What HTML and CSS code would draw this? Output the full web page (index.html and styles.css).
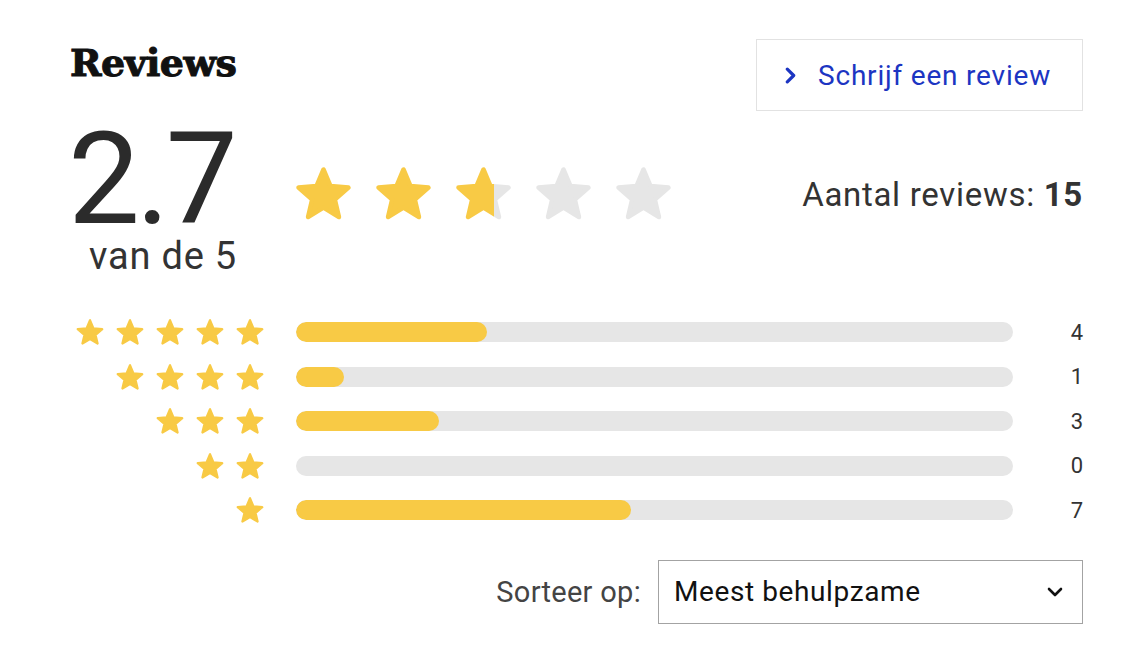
FILE: index.html
```html
<!DOCTYPE html>
<html lang="nl">
<head>
<meta charset="utf-8">
<title>Reviews</title>
<link rel="stylesheet" href="styles.css">
</head>
<body>
<svg class="defs" width="0" height="0" aria-hidden="true">
  <defs>
    <linearGradient id="partial" x1="0" x2="1" y1="0" y2="0">
      <stop offset="0.72" stop-color="#f8ca45"/>
      <stop offset="0.72" stop-color="#e6e6e6"/>
    </linearGradient>
    <symbol id="star" viewBox="0.6 0.8 22.8 21.6">
      <path d="M12 17.27L18.18 21l-1.64-7.03L22 9.24l-7.19-.61L12 2 9.19 8.63 2 9.24l5.46 4.73L5.82 21z" stroke-linejoin="round" stroke-width="1.8"/>
    </symbol>
  </defs>
</svg>
<main class="reviews">
  <header class="head">
    <h2 class="title">Reviews</h2>
    <a class="write-btn" href="#">
      <svg class="chev" viewBox="0 0 10 16"><path d="M2 2l6 6-6 6" fill="none" stroke="currentColor" stroke-width="3" stroke-linecap="round" stroke-linejoin="round"/></svg>
      <span>Schrijf een review</span>
    </a>
  </header>

  <section class="summary">
    <div class="score">
      <div class="score-num">2.7</div>
      <div class="score-of">van de 5</div>
    </div>
    <div class="big-stars">
      <svg class="bstar on"><use href="#star"/></svg>
      <svg class="bstar on"><use href="#star"/></svg>
      <svg class="bstar part"><use href="#star"/></svg>
      <svg class="bstar off"><use href="#star"/></svg>
      <svg class="bstar off"><use href="#star"/></svg>
    </div>
    <div class="count">Aantal reviews: <b>15</b></div>
  </section>

  <section class="dist">
    <div class="row">
      <div class="sstars"><svg class="sstar"><use href="#star"/></svg><svg class="sstar"><use href="#star"/></svg><svg class="sstar"><use href="#star"/></svg><svg class="sstar"><use href="#star"/></svg><svg class="sstar"><use href="#star"/></svg></div>
      <div class="bar"><div class="fill" style="width:26.667%"></div></div>
      <div class="num">4</div>
    </div>
    <div class="row">
      <div class="sstars"><svg class="sstar"><use href="#star"/></svg><svg class="sstar"><use href="#star"/></svg><svg class="sstar"><use href="#star"/></svg><svg class="sstar"><use href="#star"/></svg></div>
      <div class="bar"><div class="fill" style="width:6.667%"></div></div>
      <div class="num">1</div>
    </div>
    <div class="row">
      <div class="sstars"><svg class="sstar"><use href="#star"/></svg><svg class="sstar"><use href="#star"/></svg><svg class="sstar"><use href="#star"/></svg></div>
      <div class="bar"><div class="fill" style="width:20%"></div></div>
      <div class="num">3</div>
    </div>
    <div class="row">
      <div class="sstars"><svg class="sstar"><use href="#star"/></svg><svg class="sstar"><use href="#star"/></svg></div>
      <div class="bar"></div>
      <div class="num">0</div>
    </div>
    <div class="row">
      <div class="sstars"><svg class="sstar"><use href="#star"/></svg></div>
      <div class="bar"><div class="fill" style="width:46.667%"></div></div>
      <div class="num">7</div>
    </div>
  </section>

  <section class="sort">
    <span class="sort-label">Sorteer op:</span>
    <div class="select">
      <span>Meest behulpzame</span>
      <svg class="sel-chev" viewBox="0 0 16 10"><path d="M2 2l6 6 6-6" fill="none" stroke="currentColor" stroke-width="2.6" stroke-linecap="round" stroke-linejoin="round"/></svg>
    </div>
  </section>
</main>
</body>
</html>
```

FILE: styles.css
```css
* { box-sizing: border-box; }
html, body { margin: 0; padding: 0; background: #fff; }
body { font-family: Roboto, "Liberation Sans", sans-serif; color: #333; }
.defs { position: absolute; width: 0; height: 0; overflow: hidden; }

.reviews { padding: 39px 43px 0 70px; }

.head { display: flex; justify-content: space-between; align-items: flex-start; height: 72px; }
.title {
  margin: 0; padding-top: 4px;
  font-family: "DejaVu Serif", serif; font-weight: 700; font-size: 38px; line-height: 40px;
  color: #111; letter-spacing: -0.6px;
  -webkit-text-stroke: 1px #111;
}
.write-btn {
  display: flex; align-items: center; gap: 22px;
  width: 327px; height: 72px; padding: 0 0 0 28px;
  border: 1px solid #e2e2e2; text-decoration: none;
  color: #1c35c2; font-size: 28px; letter-spacing: 0.8px;
}
.chev { width: 11px; height: 17px; }

.summary { display: flex; align-items: flex-start; }
.score { width: 225px; padding-top: 8px; }
.score-num { font-size: 128px; line-height: 120px; color: #2b2b2b; margin-left: -2px; letter-spacing: -4px; }
.score-of { font-size: 38px; line-height: 34px; color: #333; padding-left: 19px; letter-spacing: 0.8px; }
.big-stars { display: flex; gap: 23px; margin-top: 54px; }
.bstar { width: 57px; height: 57px; }
.bstar.on { fill: #f8ca45; stroke: #f8ca45; }
.bstar.off { fill: #e6e6e6; stroke: #e6e6e6; }
.bstar.part { fill: url(#partial); stroke: url(#partial); }
.count { margin-left: auto; margin-top: 66px; font-size: 33px; line-height: 36px; color: #333; letter-spacing: 0.7px; }
.count b { font-weight: 700; }

.dist { margin-top: 37px; }
.row { display: flex; align-items: center; height: 44.5px; }
.sstars { width: 194px; display: flex; justify-content: flex-end; gap: 12px; }
.sstar { width: 28px; height: 28px; fill: #f8ca45; stroke: #f8ca45; }
.bar { width: 717px; height: 20px; margin-left: 32px; border-radius: 10px; background: #e6e6e6; overflow: hidden; }
.fill { height: 100%; border-radius: 10px; background: #f8ca45; }
.num { flex: 1; text-align: right; font-size: 22px; color: #333; }

.sort { display: flex; justify-content: flex-end; align-items: center; gap: 17px; margin-top: 27px; }
.sort-label { font-size: 29px; color: #444; letter-spacing: 0.3px; }
.select {
  display: flex; align-items: center; justify-content: space-between;
  width: 425px; height: 64px; padding: 0 19px 0 15px;
  border: 1px solid #a3a3a3; font-size: 28px; color: #111; letter-spacing: 0.6px;
}
.sel-chev { width: 16px; height: 10px; color: #111; }
```
